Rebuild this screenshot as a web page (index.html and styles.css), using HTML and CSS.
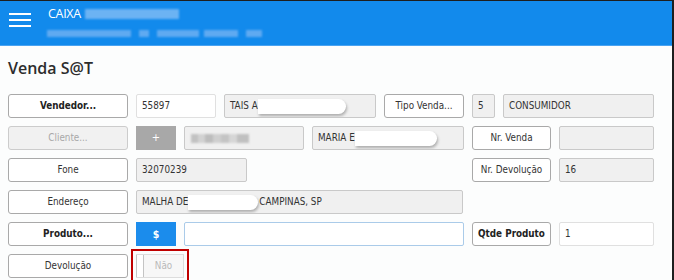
FILE: index.html
```html
<!DOCTYPE html>
<html lang="pt-BR">
<head>
<meta charset="utf-8">
<title>Venda S@T</title>
<link rel="stylesheet" href="styles.css">
</head>
<body>
<div class="frame">
  <header class="topbar">
    <div class="burger"><span></span><span></span><span></span></div>
    <div class="brand">
      <div class="brand-line1">
        <span class="caixa">CAIXA</span>
        <span class="hblur hb1"></span>
      </div>
      <div class="brand-line2">
        <span class="hblur hb2"></span>
        <span class="hblur hb3"></span>
        <span class="hblur hb4"></span>
        <span class="hblur hb5"></span>
        <span class="hblur hb6"></span>
      </div>
    </div>
  </header>
  <main class="content">
    <h1 class="title">Venda S@T</h1>
    <div class="form">
      <div class="row">
        <button class="btn bold w120">Vendedor...</button>
        <div class="field white w80">55897</div>
        <div class="field grey w152">TAIS A<span class="redact r-tais"></span></div>
        <button class="btn w80">Tipo Venda...</button>
        <div class="field grey w23">5</div>
        <div class="field grey w151">CONSUMIDOR</div>
      </div>
      <div class="row">
        <button class="btn disabled w120">Cliente...</button>
        <button class="btn sq plus w40">+</button>
        <div class="field grey w120"><span class="pixel"></span></div>
        <div class="field grey w152">MARIA E<span class="redact r-maria"></span></div>
        <button class="btn w79">Nr. Venda</button>
        <div class="field grey w95"></div>
      </div>
      <div class="row">
        <button class="btn w120">Fone</button>
        <div class="field grey w111">32070239</div>
        <button class="btn w79 push">Nr. Devolução</button>
        <div class="field grey w95">16</div>
      </div>
      <div class="row">
        <button class="btn w120">Endereço</button>
        <div class="field grey w327">MALHA DE <span class="redact r-end"></span>CAMPINAS, SP</div>
      </div>
      <div class="row">
        <button class="btn bold w120">Produto...</button>
        <button class="btn sq dollar w40">$</button>
        <div class="field focus w280"></div>
        <button class="btn bold w79">Qtde Produto</button>
        <div class="field white w95">1</div>
      </div>
      <div class="row">
        <button class="btn w120">Devolução</button>
        <div class="toggle">
          <span class="knob"></span>
          <span class="toggle-label">Não</span>
        </div>
      </div>
    </div>
  </main>
</div>
</body>
</html>
```
FILE: styles.css
```css
* { box-sizing: border-box; }
html, body { margin: 0; padding: 0; }
body { background: #fcfdfd; overflow: hidden; }

.frame {
  width: 674px;
  height: 280px;
  border-top: 1px solid #1e1e1e;
  border-right: 2px solid #1e1e1e;
  background: #fcfdfd;
  overflow: hidden;
}

.topbar {
  height: 45px;
  background: #128aec;
  border-bottom: 1px solid #4aa3f1;
  display: flex;
  align-items: flex-start;
}

.burger {
  width: 22px;
  margin: 12px 0 0 9px;
  display: flex;
  flex-direction: column;
  gap: 4px;
}
.burger span {
  display: block;
  height: 2px;
  background: #ffffff;
}

.brand {
  margin-left: 17px;
  padding-top: 5px;
  font-family: "Open Sans", "DejaVu Sans", sans-serif;
  color: #ffffff;
}
.brand-line1 {
  display: flex;
  align-items: center;
  height: 16px;
}
.caixa {
  font-size: 12.5px;
  line-height: 16px;
  letter-spacing: -0.3px;
}
.hblur {
  display: inline-block;
  background: #5faaf1;
  filter: blur(1px);
}
.hb1 { width: 94px; height: 10px; margin-left: 4px; background: #6cb3f3; }
.brand-line2 {
  display: flex;
  margin-top: 8px;
  height: 8px;
}
.hb2 { width: 84px; height: 7px; margin-left: -1px; }
.hb3 { width: 10px; height: 7px; margin-left: 8px; }
.hb4 { width: 42px; height: 7px; margin-left: 8px; }
.hb5 { width: 34px; height: 7px; margin-left: 5px; }
.hb6 { width: 16px; height: 7px; margin-left: 8px; }

.content {
  padding: 12px 0 0 8px;
}

.title {
  margin: 0 0 16px 0;
  font-family: "Open Sans", "DejaVu Sans", sans-serif;
  font-weight: 600;
  font-size: 16px;
  line-height: 20px;
  color: #2d2d2d;
}

.form {
  width: 646px;
  display: flex;
  flex-direction: column;
  gap: 8px;
}

.row {
  display: flex;
  gap: 8px;
  height: 24px;
}

.btn, .field, .toggle {
  height: 24px;
  font-family: "DejaVu Sans Condensed", "DejaVu Sans", sans-serif;
  font-size: 9.8px;
  color: #333333;
}

.btn {
  margin: 0;
  padding: 0;
  background: #ffffff;
  border: 1px solid #a9a9a9;
  border-radius: 3px;
  text-align: center;
  line-height: 22px;
}
.btn.bold { font-weight: bold; color: #222222; }
.btn.disabled {
  background: #f1f1f1;
  border-color: #cccccc;
  color: #a8a8a8;
}
.btn.sq {
  border-radius: 0;
  border: none;
  color: #ffffff;
  line-height: 24px;
}
.btn.plus { background: #a8a8a8; font-size: 11px; }
.btn.dollar { background: #1b8cec; font-weight: bold; font-size: 10.5px; }

.push { margin-left: auto; }

.field {
  border: 1px solid #c9c9c9;
  border-radius: 2px;
  padding: 0 0 0 5px;
  line-height: 22px;
  white-space: nowrap;
  overflow: hidden;
  display: flex;
  align-items: center;
}
.field.grey { background: #f0f0f0; }
.field.white { background: #ffffff; border-color: #e0e0e0; }
.field.focus { background: #ffffff; border-color: #aacbe9; }

.redact {
  display: inline-block;
  height: 15px;
  background: #ffffff;
  border-radius: 0 8px 8px 0;
  box-shadow: 1px 2px 3px rgba(0, 0, 0, 0.28);
  filter: blur(0.6px);
}
.r-tais { width: 88px; margin-left: 0; }
.r-maria { width: 82px; margin-left: 0; }
.r-end { width: 70px; margin-left: 0; margin-right: 1px; }

.pixel {
  display: inline-block;
  width: 58px;
  height: 9px;
  margin-left: 1px;
  background: linear-gradient(90deg, #c2c2c2 0 12%, #d2d2d2 12% 25%, #bdbdbd 25% 38%, #cfcfcf 38% 52%, #c4c4c4 52% 66%, #d6d6d6 66% 80%, #c0c0c0 80% 100%);
  filter: blur(0.8px);
}

.w23 { width: 23px; }
.w40 { width: 40px; }
.w79 { width: 79px; }
.w80 { width: 80px; }
.w95 { width: 95px; }
.w111 { width: 111px; }
.w120 { width: 120px; }
.w151 { width: 151px; }
.w152 { width: 152px; }
.w280 { width: 280px; }
.w327 { width: 327px; }

.toggle {
  width: 48px;
  display: flex;
  background: #f7f7f7;
  border: 1px solid #dddddd;
  outline: 2px solid #c00000;
  outline-offset: 3px;
}
.knob {
  width: 8px;
  height: 100%;
  background: #ffffff;
  border-right: 1px solid #c4c4c4;
  margin-left: -1px;
  border-left: 1px solid #c4c4c4;
}
.toggle-label {
  flex: 1;
  text-align: center;
  line-height: 22px;
  color: #b9b9b9;
}
```
